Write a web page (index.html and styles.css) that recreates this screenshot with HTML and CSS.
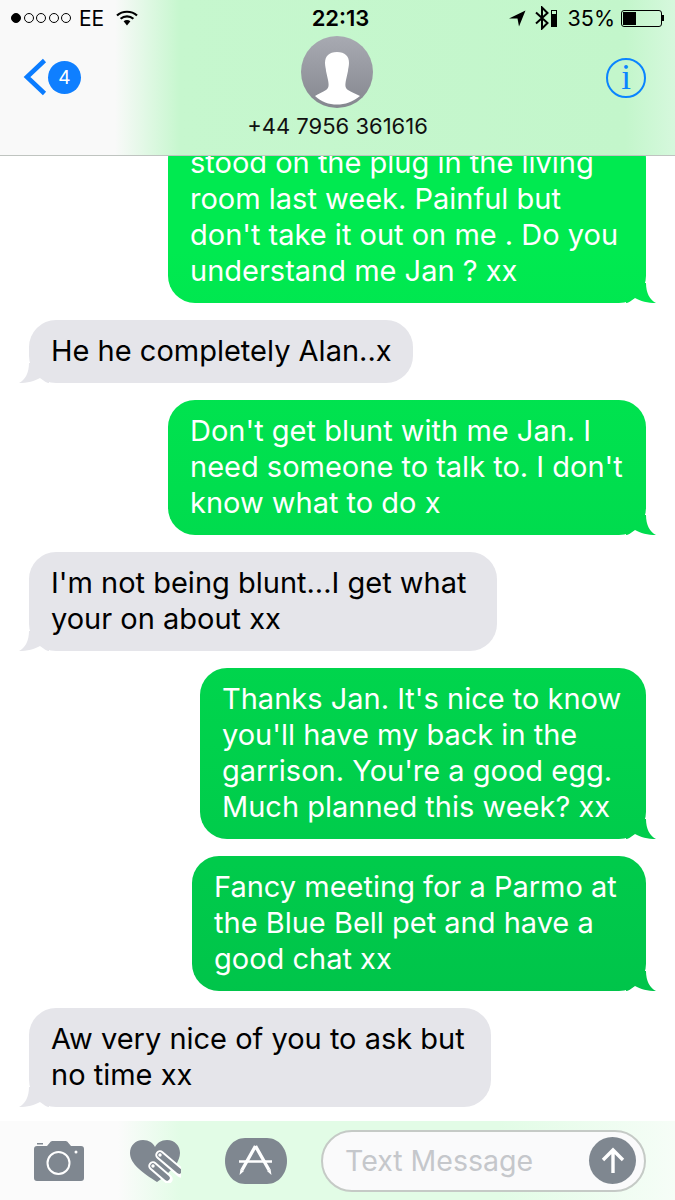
FILE: index.html
```html
<!DOCTYPE html>
<html lang="en">
<head>
    <meta charset="UTF-8">
    <title>Messages</title>
    <link rel="stylesheet" href="styles.css">
</head>
<body>
    <div class="header">
        <div class="status-bar">
            <div class="status-left">
                <div class="signal">
                    <span class="dot on"></span><span class="dot"></span><span class="dot"></span><span class="dot"></span><span class="dot"></span>
                </div>
                <span class="carrier">EE</span>
                <svg class="wifi" width="22" height="16" viewBox="0 0 22 16">
                    <path d="M1 5.5C6.5 .5 15.5 .5 21 5.5" fill="none" stroke="#000" stroke-width="2.2"/>
                    <path d="M4.6 8.8C8.2 5.6 13.8 5.6 17.4 8.8" fill="none" stroke="#000" stroke-width="2.2"/>
                    <path d="M7.6 11.2C9.6 9.6 12.4 9.6 14.4 11.2L11 15.4Z" fill="#000"/>
                </svg>
            </div>
            <div class="time">22:13</div>
            <div class="status-right">
                <svg class="arrow" width="17" height="17" viewBox="0 0 17 17"><path d="M0 8.5L16.5 .5L10 16.5L8.5 8.5Z" fill="#000"/></svg>
                <svg class="bluetooth" width="14" height="24" viewBox="0 0 14 24"><path d="M1 6.5L12.5 17L7 22.5V1.5L12.5 7L1 17.5" fill="none" stroke="#000" stroke-width="2"/></svg>
                <div class="mini-batt"><span></span></div>
                <span class="percent">35%</span>
                <div class="battery"><div class="battery-level"></div></div>
                <div class="battery-tip"></div>
            </div>
        </div>
        <div class="nav">
            <div class="back">
                <svg width="24" height="38" viewBox="0 0 24 38"><path d="M21.5 2.5L4 19L21.5 35.5" fill="none" stroke="#0a7cff" stroke-width="4.6"/></svg>
                <div class="badge">4</div>
            </div>
            <div class="contact">
                <div class="avatar">
                    <svg width="72" height="72" viewBox="0 0 72 72">
                        <path d="M36 16C28 16 24 20 24 27C24 30 25 33 25 35L27 44C28 49 28 52 25 54C22 56 17 58 14 60C20 66 28 68.500 36 68.500C44 68.500 52 66 59 60C55 58 50 56 47 54C44 52 44 49 45 44L47 35C47 33 48 30 48 27C48 20 44 16 36 16Z" fill="#fff"/>
                    </svg>
                </div>
                <div class="number">+44 7956 361616</div>
            </div>
            <div class="info"><span>i</span></div>
        </div>
    </div>

    <div class="messages">
        <div class="bubble sent w478">stood on the plug in the living<br>room last week. Painful but<br>don't take it out on me . Do you<br>understand me Jan ? xx</div>
        <div class="bubble received w384">He he completely Alan..x</div>
        <div class="bubble sent w478">Don't get blunt with me Jan. I<br>need someone to talk to. I don't<br>know what to do x</div>
        <div class="bubble received w468">I'm not being blunt...I get what<br>your on about xx</div>
        <div class="bubble sent w446">Thanks Jan. It's nice to know<br>you'll have my back in the<br>garrison. You're a good egg.<br>Much planned this week? xx</div>
        <div class="bubble sent w454">Fancy meeting for a Parmo at<br>the Blue Bell pet and have a<br>good chat xx</div>
        <div class="bubble received w462">Aw very nice of you to ask but<br>no time xx</div>
    </div>

    <div class="footer">
        <svg class="tool camera" width="52" height="42" viewBox="0 0 52 42">
            <path d="M4 6H14L17 2.500C17.500 1.500 18.500 1 20 1H32C33.500 1 34.500 1.500 35 2.500L38 6H48C50 6 51 7 51 9V38C51 40 50 41 48 41H4C2 41 1 40 1 38V9C1 7 2 6 4 6Z" fill="#7f8790"/>
            <circle cx="25.500" cy="23" r="11" fill="none" stroke="#fff" stroke-width="2"/>
            <circle cx="43" cy="12" r="1.500" fill="#fff"/>
            <rect x="4" y="3" width="6" height="1.500" fill="#7f8790"/>
        </svg>
        <svg class="tool heart" width="52" height="44" viewBox="0 0 52 44">
            <path d="M14 1C6 1 1 7 1 14C1 25 14 34 28 43L35 38L47 26C49 22 51 18 51 14C51 7 46 1 38 1C32 1 28 4 26 8C24 4 20 1 14 1Z" fill="#7f8790"/>
            <path d="M24 27L39 40M31 16L52 34" stroke="#fff" stroke-width="9.500" stroke-linecap="round" fill="none"/>
            <path d="M24 27L38 39M31 16L50 32" stroke="#7f8790" stroke-width="5.500" stroke-linecap="round" fill="none"/>
            <circle cx="24" cy="27" r="1.700" fill="#fff"/>
            <circle cx="31" cy="16" r="1.700" fill="#fff"/>
        </svg>
        <svg class="tool store" width="62" height="46" viewBox="0 0 62 46">
            <path d="M20 0H42C54 0 62 11 62 23C62 35 54 46 42 46H20C8 46 0 35 0 23C0 11 8 0 20 0Z" fill="#7f8790"/>
            <path d="M30.500 8L17 32M30.500 8L44 32" fill="none" stroke="#fff" stroke-width="3.400"/>
            <path d="M15.500 31L14.500 37L19 33ZM45.500 31L46.500 37L42 33Z" fill="#fff"/>
            <path d="M14 23.500H47" fill="none" stroke="#fff" stroke-width="2.600"/>
        </svg>
        <div class="input">
            <span class="placeholder">Text Message</span>
            <div class="send">
                <svg width="26" height="30" viewBox="0 0 26 30"><path d="M13 27V4M3 14L13 4L23 14" fill="none" stroke="#fff" stroke-width="3.400"/></svg>
            </div>
        </div>
    </div>
</body>
</html>
```

FILE: styles.css
```css
* {
    box-sizing: border-box;
}

body {
    font-family: Inter, "Liberation Sans", sans-serif;
    background-color: #fff;
    margin: 0;
    height: 1200px;
    overflow: hidden;
    display: flex;
    flex-direction: column; /* header, thread, input bar */
}

.header {
    height: 156px;
    flex: none;
    border-bottom: 1px solid #bfc4c0;
    background: linear-gradient(90deg, #f9f9f9 0, #f9f9f9 115px, #c6f7ce 180px, #c3f6cb 625px, #d6f8dd 675px);
}

.status-bar {
    height: 36px;
    display: grid;
    grid-template-columns: 1fr auto 1fr;
    align-items: center;
    padding: 0 11px;
    font-size: 21px;
    color: #000;
}

.status-left,
.status-right {
    display: flex;
    align-items: center;
}

.status-right {
    justify-content: flex-end;
}

.signal {
    display: flex;
    gap: 2.5px;
    margin-right: 8px;
}

.dot {
    width: 10px;
    height: 10px;
    border: 1px solid #000;
    border-radius: 50%;
}

.dot.on {
    background: #000;
}

.carrier {
    margin-right: 12px;
}

.time {
    margin-left: 6px;
    font-weight: 600;
    font-size: 22px;
}

.arrow {
    margin-right: 9px;
}

.bluetooth {
    margin-right: 2px;
}

.mini-batt {
    width: 6px;
    height: 17px;
    border: 1px solid #000;
    padding-top: 3px;
    margin-right: 11px;
}

.mini-batt span {
    display: block;
    height: 100%;
    background: #000;
}

.percent {
    margin-right: 6px;
    font-size: 21.5px;
}

.battery {
    width: 41px;
    height: 17px;
    border: 1px solid #000;
    border-radius: 3px;
    padding: 1px;
}

.battery-level {
    width: 13px;
    height: 100%;
    background: #000;
}

.battery-tip {
    width: 2px;
    height: 6px;
    background: #000;
}

.nav {
    display: grid;
    grid-template-columns: 1fr auto 1fr;
    padding: 0 29px;
}

.back {
    display: flex;
    align-items: center;
    height: 82px;
    margin-left: -6px;
}

.badge {
    width: 33px;
    height: 33px;
    margin-left: 1px;
    border-radius: 50%;
    background: #0f7fff;
    color: #fff;
    font-size: 19px;
    line-height: 33px;
    text-align: center;
}

.contact {
    display: flex;
    flex-direction: column;
    align-items: center;
}

.avatar {
    width: 72px;
    height: 72px;
    border-radius: 50%;
    overflow: hidden;
    background: linear-gradient(180deg, #a8aab2, #85878f);
}

.avatar svg {
    display: block;
}

.number {
    margin-top: 5px;
    font-size: 22px;
    line-height: 26px;
    color: #111;
}

.info {
    justify-self: end;
    width: 40px;
    height: 40px;
    margin-top: 22px;
    border: 2px solid #0a84ff;
    border-radius: 50%;
    color: #0a84ff;
    font-family: "Liberation Serif", serif;
    font-size: 35px;
    line-height: 36px;
    text-align: center;
}

.messages {
    flex: 1;
    min-height: 0;
    overflow: hidden;
    display: flex;
    flex-direction: column;
    justify-content: flex-end;
    gap: 17px;
    padding: 0 29px 14px;
    font-size: 29px;
    line-height: 36px;
}

.bubble {
    position: relative;
    flex: none;
    padding: 12.5px 22px 14.5px;
    border-radius: 27px;
    white-space: nowrap;
}

.bubble::after {
    content: '';
    position: absolute;
    bottom: 0;
    width: 30px;
    height: 20px;
}

.sent {
    align-self: flex-end;
    color: #fff;
    background: linear-gradient(180deg, #00ea50 250px, #00bf49 1100px) fixed;
}

.sent::after {
    right: -10px;
    background: inherit;
    clip-path: path('M20 0C20 10 24 17 30 20C22 20 14 18 9 15C5 18 2 20 0 20L0 0Z');
}

.received {
    align-self: flex-start;
    color: #000;
    background: #e5e5ea;
}

.received::after {
    left: -10px;
    background: #e5e5ea;
    clip-path: path('M10 0C10 10 6 17 0 20C8 20 16 18 21 15C25 18 28 20 30 20L30 0Z');
}

.w384 { width: 384px; }
.w446 { width: 446px; }
.w454 { width: 454px; }
.w462 { width: 462px; }
.w468 { width: 468px; }
.w478 { width: 478px; }

.footer {
    height: 79px;
    flex: none;
    display: flex;
    align-items: center;
    padding: 0 29px 0 33px;
    background: linear-gradient(90deg, #fbfbfb 0, #fbfbfb 118px, #e2fce6 180px, #e2fce6 500px, #f6fdf7 675px);
}

.tool {
    flex: none;
}

.camera {
    margin-right: 44px;
}

.heart {
    margin-right: 44px;
}

.store {
    margin-right: 34px;
}

.input {
    flex: 1;
    height: 62px;
    display: flex;
    align-items: center;
    justify-content: space-between;
    padding: 0 8px 0 22px;
    border: 2px solid #c5cac6;
    border-radius: 31px;
    background: #fafafb;
}

.placeholder {
    font-size: 28.5px;
    color: #c5c7cb;
}

.send {
    width: 47px;
    height: 47px;
    border-radius: 50%;
    background: #7f8790;
    display: flex;
    align-items: center;
    justify-content: center;
}
```
